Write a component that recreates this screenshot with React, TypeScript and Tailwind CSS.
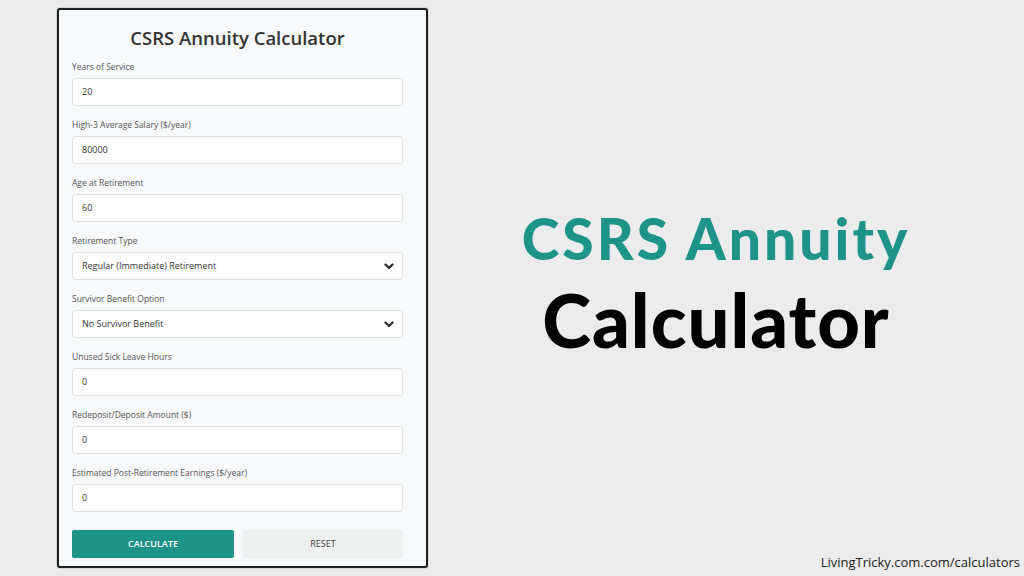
import React from "react";

const fields: { label: string; value: string; select?: boolean }[] = [
  { label: "Years of Service", value: "20" },
  { label: "High-3 Average Salary ($/year)", value: "80000" },
  { label: "Age at Retirement", value: "60" },
  { label: "Retirement Type", value: "Regular (Immediate) Retirement", select: true },
  { label: "Survivor Benefit Option", value: "No Survivor Benefit", select: true },
  { label: "Unused Sick Leave Hours", value: "0" },
  { label: "Redeposit/Deposit Amount ($)", value: "0" },
  { label: "Estimated Post-Retirement Earnings ($/year)", value: "0" },
];

function Chevron() {
  return (
    <svg width="10" height="7" viewBox="0 0 10 7">
      <path d="M1.5 1.5 L5 5 L8.5 1.5" fill="none" stroke="#333" strokeWidth="2.4" strokeLinecap="round" strokeLinejoin="round" />
    </svg>
  );
}

export default function App() {
  return (
    <div
      className="w-[1024px] h-[576px] bg-[#ececec] relative overflow-hidden flex"
      style={{ fontFamily: '"Open Sans", "Noto Sans", sans-serif' }}
    >
      <div className="ml-[57px] mt-[8px] w-[371px] h-[560px] border-2 border-[#1e1e1e] rounded-[3px] bg-[#f8f9fb] shadow-[0_0_0_1px_#d6d6d6] pl-[13px] pr-[23px] pt-[15px] flex flex-col">
        <h1 className="text-center text-[18.5px] leading-[26px] font-semibold text-[#333] mb-[10px]">
          CSRS Annuity Calculator
        </h1>
        {fields.map((f) => (
          <div key={f.label} className="flex flex-col mb-[13px]">
            <div className="text-[8.5px] leading-[12px] text-[#555]">{f.label}</div>
            <div className="mt-[5px] h-[28px] bg-white border border-[#e2e2e2] rounded-[3px] flex items-center justify-between pl-[9px] pr-[8px] text-[9px] text-[#333]">
              <span>{f.value}</span>
              {f.select ? <Chevron /> : null}
            </div>
          </div>
        ))}
        <div className="flex gap-[9px] mt-[5px]">
          <div className="w-[162px] h-[28px] bg-[#1e9488] rounded-[2px] flex items-center justify-center text-white text-[9px] font-semibold">
            CALCULATE
          </div>
          <div className="flex-1 h-[28px] bg-[#eeefef] rounded-[2px] flex items-center justify-center text-[#444] text-[9px]">
            RESET
          </div>
        </div>
      </div>

      <div className="flex-1 flex flex-col items-center pt-[205px] pr-[20px]" style={{ fontFamily: 'Lato, sans-serif' }}>
        <div className="text-[57px] leading-[66px] font-black text-[#1e9488] tracking-[3px]">CSRS Annuity</div>
        <div className="text-[74px] leading-[84px] font-black text-black mt-[7px] tracking-[1px]">Calculator</div>
      </div>

      <div className="absolute right-[4px] bottom-[4px] text-[13px] text-[#222]">
        LivingTricky.com.com/calculators
      </div>
    </div>
  );
}
